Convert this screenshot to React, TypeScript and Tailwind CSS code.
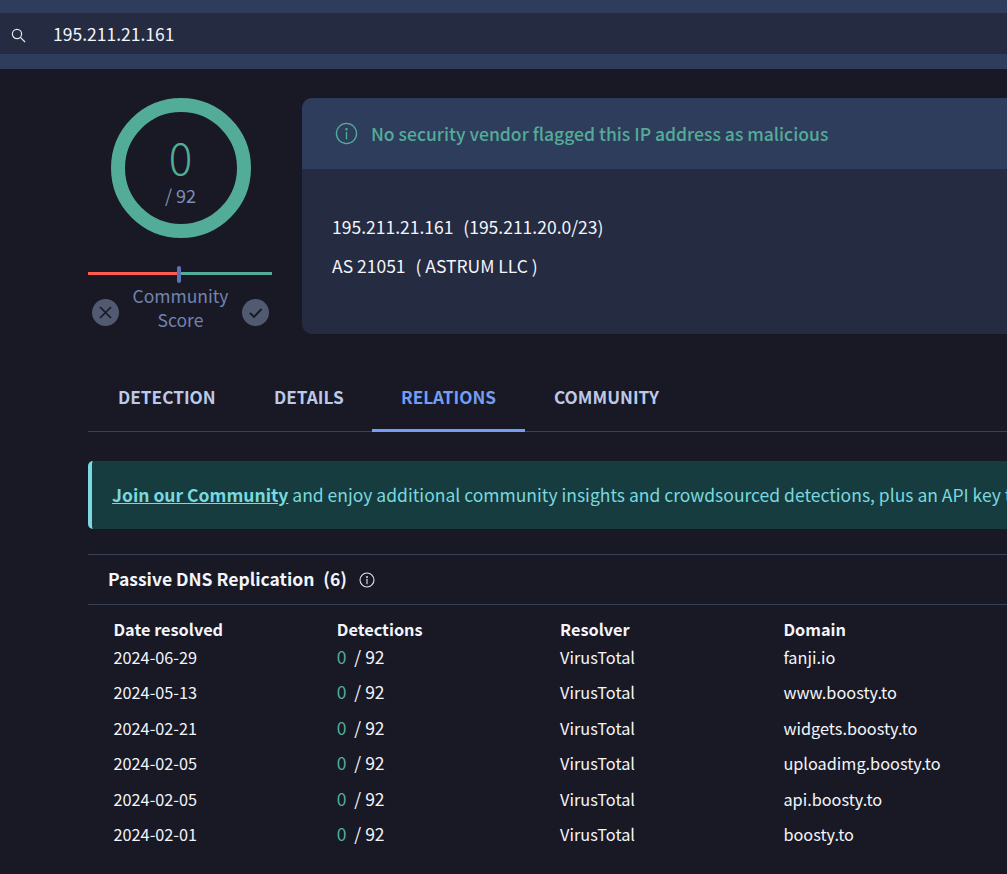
import React from "react";

const rows = [
  ["2024-06-29", "fanji.io"],
  ["2024-05-13", "www.boosty.to"],
  ["2024-02-21", "widgets.boosty.to"],
  ["2024-02-05", "uploadimg.boosty.to"],
  ["2024-02-05", "api.boosty.to"],
  ["2024-02-01", "boosty.to"],
];

const font = { fontFamily: '"Noto Sans CJK JP", "Noto Sans", sans-serif' };

function InfoIcon({ size, color, sw }: { size: number; color: string; sw: number }) {
  return (
    <svg width={size} height={size} viewBox="0 0 24 24" fill="none" stroke={color} strokeWidth={sw}>
      <circle cx="12" cy="12" r="10.5" />
      <path d="M12 11v6.5" strokeLinecap="round" />
      <circle cx="12" cy="7.5" r="0.6" fill={color} />
    </svg>
  );
}

export default function App() {
  return (
    <div className="w-[1007px] h-[874px] overflow-hidden bg-[#181925] text-white" style={font}>
      <div className="pt-[13px] pb-[15px] bg-[#2e3d5c]">
        <div className="h-[41px] bg-[#252c42] flex items-center">
          <svg className="ml-[11px]" width="16" height="18" viewBox="0 0 16 18" fill="none" stroke="#e5e7eb" strokeWidth="1.2">
            <circle cx="6" cy="9" r="4.6" />
            <path d="M9.4 12.4 L14 17" />
          </svg>
          <span className="ml-[26px] text-[17.5px] leading-none text-[#f3f5fa]">195.211.21.161</span>
        </div>
      </div>

      <div className="pl-[88px]">
        <div className="flex pt-[29px]">
          <div className="w-[184px] shrink-0 flex flex-col items-center">
            <div className="ml-[1px] w-[140px] h-[140px] rounded-full border-[14px] border-[#53ac97] flex flex-col items-center">
              <div className="mt-[22px] text-[44px] leading-[44px] font-light text-[#53ac97]">0</div>
              <div className="mt-[7px] text-[18px] leading-[20px] text-[#7f8db8]">/ 92</div>
            </div>
            <div className="relative w-[184px] h-[3px] mt-[34px] flex">
              <div className="w-1/2 bg-[#ff5a50]" />
              <div className="w-1/2 bg-[#53ac97]" />
              <div className="absolute left-[89px] top-[-6px] w-[4px] h-[17px] rounded-[2px] bg-[#5a74b5]" />
            </div>
            <div className="w-[184px] mt-[10px] flex justify-between pl-[4px] pr-[3px]">
              <div className="mt-[14px] w-[27px] h-[27px] rounded-full bg-[#515a70] flex items-center justify-center">
                <svg width="15" height="15" viewBox="0 0 15 15" stroke="#181925" strokeWidth="1.7" fill="none"><path d="M2 2 L13 13 M13 2 L2 13" /></svg>
              </div>
              <div className="mt-[-1px] text-center text-[17.5px] leading-[24px] text-[#7483ae]">Community<br />Score</div>
              <div className="mt-[14px] w-[27px] h-[27px] rounded-full bg-[#515a70] flex items-center justify-center">
                <svg width="15" height="15" viewBox="0 0 15 15" stroke="#181925" strokeWidth="1.9" fill="none"><path d="M2 8 L6 12 L13.5 4" /></svg>
              </div>
            </div>
          </div>

          <div className="ml-[30px] w-[800px] h-[236px] shrink-0 rounded-l-[10px] overflow-hidden bg-[#252c42]">
            <div className="h-[71px] bg-[#2e3d5c] flex items-center pl-[33px]">
              <InfoIcon size={23} color="#53ac97" sw={1.4} />
              <span className="ml-[13px] mt-[2px] text-[17.55px] font-medium text-[#53ac97]">No security vendor flagged this IP address as malicious</span>
            </div>
            <div className="pl-[30px] pt-[42px] text-[17.5px] text-[#f3f5fa]">
              <div className="leading-[32px] whitespace-pre">195.211.21.161  <span className="ml-[2px]">(195.211.20.0/23)</span></div>
              <div className="leading-[32px] mt-[7px] whitespace-pre">AS 21051  <span className="ml-[2px]">( ASTRUM LLC )</span></div>
            </div>
          </div>
        </div>

        <div className="mt-[39px] h-[59px] flex border-b border-[#3a4156] relative text-[17.2px] font-bold text-[#bcc9e8]">
          <div className="w-[157px] pl-[30px] pt-[9px] leading-[30px]">DETECTION</div>
          <div className="w-[127px] pl-[29px] pt-[9px] leading-[30px]">DETAILS</div>
          <div className="w-[153px] h-[59px] pt-[9px] leading-[30px] text-center border-b-[3px] border-[#759df3] text-[#759df3]">RELATIONS</div>
          <div className="pl-[29px] pt-[9px] leading-[30px]">COMMUNITY</div>
        </div>

        <div className="mt-[29px] h-[68px] w-[930px] rounded-l-[5px] bg-[#163c40] border-l-[4px] border-[#7ad8de] flex items-center pl-[20px] text-[17.5px] text-[#7ad8de] whitespace-nowrap overflow-hidden">
          <a className="font-bold underline">Join our Community</a>
          <span>&nbsp;and enjoy additional community insights and crowdsourced detections, plus an API key to automate checks.</span>
        </div>

        <div className="mt-[25px] h-[51px] border-y border-[#3a4156] flex items-center pl-[20px] font-bold text-[17.5px] text-[#f3f5fa]">
          <span className="whitespace-pre">Passive DNS Replication  <span className="ml-[1px]">(6)</span></span>
          <span className="ml-[12px] flex"><InfoIcon size={16} color="#e5e7eb" sw={1.6} /></span>
        </div>

        <div className="pl-[25.5px] pt-[11px] text-[16.3px] text-[#f3f5fa]">
          <div className="grid grid-cols-[223.3px_223.3px_223.3px_1fr] h-[28px] leading-[27px] font-bold">
            <div>Date resolved</div><div>Detections</div><div>Resolver</div><div>Domain</div>
          </div>
          {rows.map(([d, h]) => (
            <div key={d + h} className="grid grid-cols-[223.3px_223.3px_223.3px_1fr] h-[35.4px] leading-[27px]">
              <div>{d}</div>
              <div className="text-[17.5px] leading-[25px]"><span className="text-[#53ac97]">0</span> &nbsp;/ 92</div>
              <div>VirusTotal</div>
              <div>{h}</div>
            </div>
          ))}
        </div>
      </div>
    </div>
  );
}
